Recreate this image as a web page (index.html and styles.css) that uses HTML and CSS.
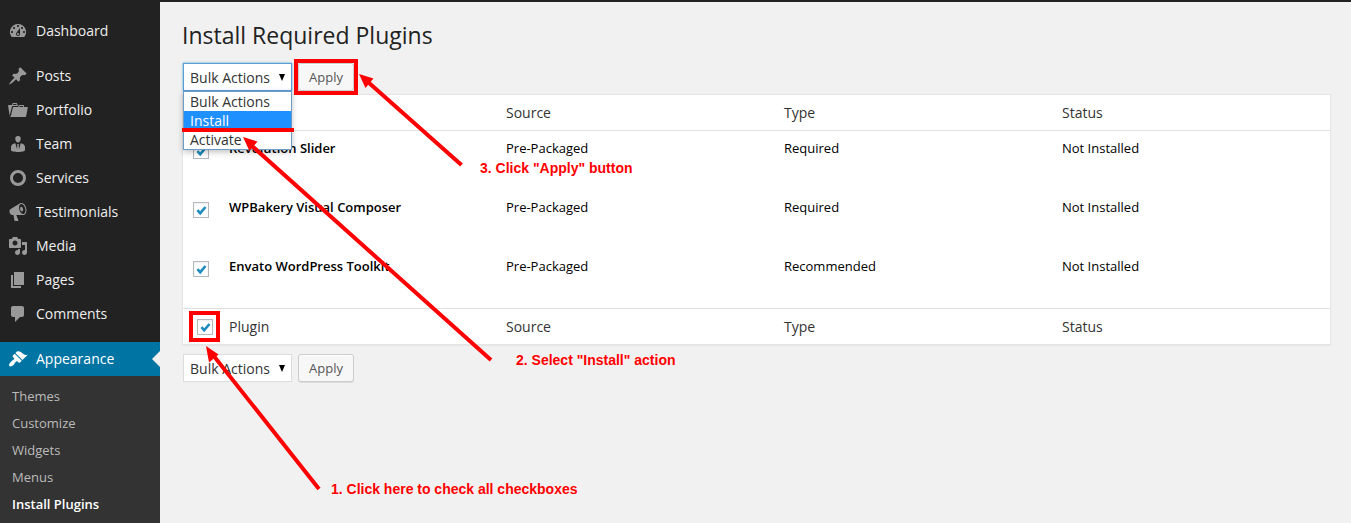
FILE: index.html
```html
<!DOCTYPE html>
<html lang="en">
<head>
<meta charset="utf-8">
<title>Install Required Plugins</title>
<link rel="stylesheet" href="styles.css">
</head>
<body>
<div class="topbar"></div>
<div class="layout">
  <nav class="sidebar">
    <a class="item first"><svg class="icon" viewBox="0 0 20 20"><path fill-rule="evenodd" d="M3.76 16h12.48A7.998 7.998 0 0 0 10 3a7.998 7.998 0 0 0-6.24 13zM10 4c.55 0 1 .45 1 1s-.45 1-1 1-1-.45-1-1 .45-1 1-1zM6 6c.55 0 1 .45 1 1s-.45 1-1 1-1-.45-1-1 .45-1 1-1zm8 0c.55 0 1 .45 1 1s-.45 1-1 1-1-.45-1-1 .45-1 1-1zm-5.370 5.550L12 7v6c0 1.100-.9 2-2 2s-2-.9-2-2c0-.57.24-1.080.63-1.450zM4 10c.55 0 1 .45 1 1s-.45 1-1 1-1-.45-1-1 .45-1 1-1zm12 0c.55 0 1 .45 1 1s-.45 1-1 1-1-.45-1-1 .45-1 1-1zm-5 3c0-.55-.45-1-1-1s-1 .45-1 1 .45 1 1 1 1-.45 1-1z"/></svg>Dashboard</a>
    <a class="item"><svg class="icon" viewBox="0 0 20 20"><path d="M10.44 3.02l1.82-1.82 6.36 6.35-1.83 1.82c-1.05-.68-2.48-.57-3.41.36l-.75.75c-.92.93-1.04 2.35-.35 3.41l-1.83 1.82-2.41-2.41-2.8 2.79c-.42.42-3.38 2.71-3.8 2.29s1.86-3.39 2.28-3.81l2.79-2.79L4.1 9.36l1.83-1.82c1.05.69 2.48.57 3.4-.36l.75-.75c.93-.92 1.05-2.35.36-3.41z"/></svg>Posts</a>
    <a class="item"><svg class="icon" viewBox="0 0 20 20"><path fill-rule="evenodd" d="M4 5H.78c-.37 0-.74.32-.69.84l1.56 9.99S3.5 8.47 3.86 6.7c.11-.53.61-.7.98-.7H10s-.7-2.08-.77-2.31C9.11 3.25 8.89 3 8.45 3H5.14c-.36 0-.7.23-.8.64C4.25 4.04 4 5 4 5zm4.88 0h-4s.42-1 .87-1h2.13c.48 0 1 1 1 1zM2.67 16.25c-.31.47-.76.75-1.26.75h15.73c.54 0 .92-.31 1.03-.83.44-2.19 1.68-8.44 1.68-8.44.07-.5-.3-.73-.62-.73H16V5.53c0-.16-.26-.53-.66-.53h-3.76c-.52 0-.87.58-.87.58L10 7H5.59c-.32 0-.63.19-.69.5 0 0-1.59 6.7-1.79 7.6-.09.38-.24.84-.44 1.15zM15.38 7H11s.58-1 1.13-1h2.29c.71 0 .96 1 .96 1z"/></svg>Portfolio</a>
    <a class="item"><svg class="icon" viewBox="0 0 20 20"><path d="M10 2c1.900 0 2.900 1.200 2.700 3C12.500 7 11.500 8.500 10 8.500S7.500 7 7.300 5C7.100 3.200 8.100 2 10 2z"/><path d="M7.400 9.200l1.700 6L9.300 11.200l-.6-1h2.600l-.6 1 .3 4 1.700-6c2.700.3 4.300 1.700 4.300 4v3c0 1-3.500 1.700-7 1.700s-7-.7-7-1.700v-3c0-2.300 1.700-3.700 4.400-4z"/></svg>Team</a>
    <a class="item"><svg class="icon" viewBox="0 0 20 20"><path fill-rule="evenodd" d="M10 2a8 8 0 1 0 0 16 8 8 0 0 0 0-16zm0 13a5 5 0 1 1 0-10 5 5 0 0 1 0 10z"/></svg>Services</a>
    <a class="item"><svg class="icon" viewBox="0 0 20 20"><path fill-rule="evenodd" d="M18.15 5.94c.46 1.62.38 3.22-.02 4.48-.42 1.28-1.26 2.18-2.3 2.48-.16.06-.26.06-.4.06-.06.02-.12.02-.18.02-.06.02-.14.02-.22.02h-6.8l2.22 5.5c.02.14-.06.26-.14.34-.08.1-.24.16-.34.16H6.95c-.1 0-.26-.06-.34-.16-.08-.08-.16-.2-.14-.34l-1-5.5H4.25l-.02-.02c-.5.06-1.08-.18-1.54-.62s-.88-1.08-1.06-1.88c-.24-.8-.2-1.56-.02-2.2.18-.62.58-1.08 1.06-1.3l.02-.02 9-5.4c.1-.06.18-.1.24-.16.06-.04.14-.08.24-.12.16-.08.28-.12.5-.18 1.04-.3 2.24.1 3.22.98s1.84 2.24 2.26 3.86zm-2.58 5.98h-.02c.4-.1.74-.34 1.04-.7.58-.7.86-1.76.86-3.04 0-.64-.1-1.3-.28-1.98-.34-1.36-1.02-2.5-1.78-3.24s-1.68-1.1-2.46-.88c-.82.22-1.4.96-1.7 2-.32 1.04-.28 2.36.06 3.72.38 1.36 1 2.5 1.8 3.24.78.74 1.62 1.1 2.48.88zm-2.54-7.08c.22-.04.42-.02.62.04.38.16.76.48 1.02 1s.42 1.2.42 1.78c0 .3-.04.56-.12.8-.18.48-.44.84-.86.94-.34.1-.8-.06-1.14-.4s-.64-.86-.78-1.5c-.18-.62-.12-1.24.02-1.72s.48-.84.82-.94z"/></svg>Testimonials</a>
    <a class="item"><svg class="icon" viewBox="0 0 20 20"><path fill-rule="evenodd" d="M13 11V4c0-.55-.45-1-1-1h-1.67L9 1H5L3.67 3H2c-.55 0-1 .45-1 1v7c0 .55.45 1 1 1h10c.55 0 1-.45 1-1zM7 4.5c1.38 0 2.500 1.120 2.500 2.500S8.380 9.500 7 9.500 4.500 8.380 4.500 7 5.620 4.500 7 4.500zM14 6h5v10.500c0 1.380-1.120 2.500-2.500 2.500S14 17.880 14 16.500s1.120-2.500 2.500-2.500c.17 0 .34.02.5.05V9h-3V6zm-4 8.050V13h2v3.500c0 1.380-1.120 2.500-2.500 2.500S7 17.880 7 16.500 8.120 14 9.500 14c.17 0 .34.02.5.05z"/></svg>Media</a>
    <a class="item"><svg class="icon" viewBox="0 0 20 20"><path d="M6 15V2h10v13H6zm-1 1h8v2H3V5h2v11z"/></svg>Pages</a>
    <a class="item"><svg class="icon" viewBox="0 0 20 20"><path d="M5 2h9c1.100 0 2 .9 2 2v7c0 1.100-.9 2-2 2h-2l-5 5v-5H5c-1.100 0-2-.9-2-2V4c0-1.100.9-2 2-2z"/></svg>Comments</a>
    <a class="item current"><svg class="icon" viewBox="0 0 20 20"><path d="M14.48 11.06L7.41 3.99l1.5-1.5c.5-.56 2.3-.47 3.51.32 1.21.8 1.43 1.28 2.91 2.1 1.18.64 2.45 1.26 4.45.85zm-.71.71L6.7 4.7 4.93 6.47c-.39.39-.39 1.02 0 1.41l1.06 1.06c.39.39.39 1.03 0 1.42-.6.6-1.43 1.11-2.21 1.69-.35.26-.7.53-1.01.84C1.43 14.23.4 16.08 1.4 17.07c.99 1 2.84-.03 4.18-1.36.31-.31.58-.66.85-1.02.57-.78 1.08-1.61 1.69-2.21.39-.39 1.02-.39 1.41 0l1.06 1.06c.39.39 1.02.39 1.41 0z"/></svg>Appearance</a>
    <div class="submenu">
      <a>Themes</a><a>Customize</a><a>Widgets</a><a>Menus</a><a class="active">Install Plugins</a>
    </div>
  </nav>
  <main class="content">
    <h1>Install Required Plugins</h1>
    <div class="actions">
      <div class="select focused"><span>Bulk Actions</span><i class="caret"></i>
        <div class="options"><div>Bulk Actions</div><div class="chosen">Install</div><div>Activate</div></div>
      </div>
      <div class="button">Apply</div>
    </div>
    <div class="table">
      <div class="row head"><span></span><span></span><span>Source</span><span>Type</span><span>Status</span></div>
      <div class="row"><span class="check"><svg viewBox="0 0 14 14"><path d="M3.400 7.200l2.800 3L11.500 4"/></svg></span><b>Revolution Slider</b><span>Pre-Packaged</span><span>Required</span><span>Not Installed</span></div>
      <div class="row"><span class="check"><svg viewBox="0 0 14 14"><path d="M3.400 7.200l2.800 3L11.500 4"/></svg></span><b>WPBakery Visual Composer</b><span>Pre-Packaged</span><span>Required</span><span>Not Installed</span></div>
      <div class="row"><span class="check"><svg viewBox="0 0 14 14"><path d="M3.400 7.200l2.800 3L11.500 4"/></svg></span><b>Envato WordPress Toolkit</b><span>Pre-Packaged</span><span>Recommended</span><span>Not Installed</span></div>
      <div class="row foot"><span class="check"><svg viewBox="0 0 14 14"><path d="M3.400 7.200l2.800 3L11.500 4"/></svg></span><span>Plugin</span><span>Source</span><span>Type</span><span>Status</span></div>
    </div>
    <div class="actions bottom">
      <div class="select"><span>Bulk Actions</span><i class="caret"></i></div>
      <div class="button">Apply</div>
    </div>
  </main>
</div>
<svg class="notes" width="1351" height="523" viewBox="0 0 1351 523">
  <g class="strokes">
    <rect x="296" y="61" width="60" height="32"/>
    <rect x="191" y="313" width="27" height="27"/>
    <path d="M182 130H294M461.500 165L368 82M491 360L252 146M319 489L213 355"/>
  </g>
  <g class="heads">
    <path d="M359 74L373.500 78.500L365.500 88Z"/>
    <path d="M243 137L257.500 141.500L249.500 151Z"/>
    <path d="M206 346L218.500 354.500L209 362.500Z"/>
  </g>
  <g class="captions">
    <text x="480" y="173" textLength="152.500">3. Click "Apply" button</text>
    <text x="516" y="365" textLength="159.500">2. Select "Install" action</text>
    <text x="331" y="494" textLength="246.500">1. Click here to check all checkboxes</text>
  </g>
</svg>
</body>
</html>
```
FILE: styles.css
```css
* { box-sizing: border-box; }
body {
  margin: 0;
  height: 523px;
  overflow: hidden;
  background: #f1f1f1;
  color: #333;
  font: 14px/19px "Open Sans", sans-serif;
}
.topbar { height: 2px; background: #222; }
.layout { display: flex; height: 521px; }
.sidebar { width: 160px; flex: none; padding-top: 12px; background: #222; }
.item {
  display: flex;
  align-items: center;
  gap: 8px;
  height: 34px;
  padding: 0 0 2px 8px;
  color: #eee;
}
.item.first { margin-bottom: 11px; }
.icon { width: 20px; height: 20px; margin-top: 2px; fill: #999; }
.item.current { position: relative; margin-top: 11px; background: #0074a2; color: #fff; }
.item.current .icon { fill: #fff; }
.item.current::after {
  content: "";
  position: absolute;
  right: 0;
  top: 9px;
  border: 8px solid transparent;
  border-left: 0;
  border-right-color: #f1f1f1;
}
.submenu { display: flex; flex-direction: column; height: 160px; padding: 7px 12px; background: #333; }
.submenu a { height: 27px; flex: none; color: #bbb; font-size: 13px; line-height: 27px; }
.submenu .active { color: #fff; font-weight: 600; }

.content { flex: 1; padding: 18px 20px 0 22px; }
h1 { margin: 0; color: #222; font-size: 23px; font-weight: 400; line-height: 31px; }
.actions { display: flex; gap: 6px; height: 28px; margin: 12px 0 0 1px; }
.actions.bottom { margin-top: 9px; }
.select {
  position: relative;
  display: flex;
  align-items: center;
  justify-content: space-between;
  width: 109px;
  height: 28px;
  padding: 0 6px;
  border: 1px solid #ddd;
  background: #fff;
}
.select.focused { border-color: #5b9dd9; box-shadow: 0 0 2px rgba(30, 140, 190, .8); }
.caret { border: 3.5px solid transparent; border-top: 7px solid #000; border-bottom: 0; }
.options {
  position: absolute;
  left: -1px;
  top: 27px;
  width: 109px;
  border: 1px solid #6c9cc7;
  background: #fff;
  box-shadow: 0 2px 6px rgba(0, 0, 0, .25);
}
.options div { height: 19px; padding-left: 6px; line-height: 19px; }
.options .chosen { background: #1e90ff; color: #fff; }
.button {
  width: 56px;
  height: 28px;
  border: 1px solid #ccc;
  border-radius: 3px;
  background: #f7f7f7;
  box-shadow: inset 0 1px 0 #fff, 0 1px 0 rgba(0, 0, 0, .08);
  color: #555;
  font-size: 13px;
  line-height: 26px;
  text-align: center;
}
.table { height: 251px; margin-top: 3px; border: 1px solid #e5e5e5; background: #fff; box-shadow: 0 1px 1px rgba(0, 0, 0, .04); }
.row {
  display: grid;
  grid-template-columns: 46px 277px 278px 278px 1fr;
  height: 59px;
  padding-top: 8px;
  color: #000;
  font-size: 13px;
}
.row b { font-weight: 600; }
.row.head, .row.foot { height: 36px; color: #333; font-size: 14px; }
.row.head { border-bottom: 1px solid #e1e1e1; }
.row.foot { border-top: 1px solid #e1e1e1; }
.check {
  width: 16px;
  height: 16px;
  margin: 4px 0 0 10px;
  border: 1px solid #b4b9be;
  background: #fff;
  box-shadow: inset 0 1px 2px rgba(0, 0, 0, .07);
}
.row.foot .check { margin: 2px 0 0 14px; }
.check svg { display: block; width: 14px; height: 14px; fill: none; stroke: #1e8cbe; stroke-width: 2.6; }

.notes { position: absolute; left: 0; top: 0; }
.strokes { fill: none; stroke: #f00; stroke-width: 4; }
.heads { fill: #f00; }
.captions { fill: #f00; font: bold 14px "Liberation Sans", Arial, sans-serif; }
```
